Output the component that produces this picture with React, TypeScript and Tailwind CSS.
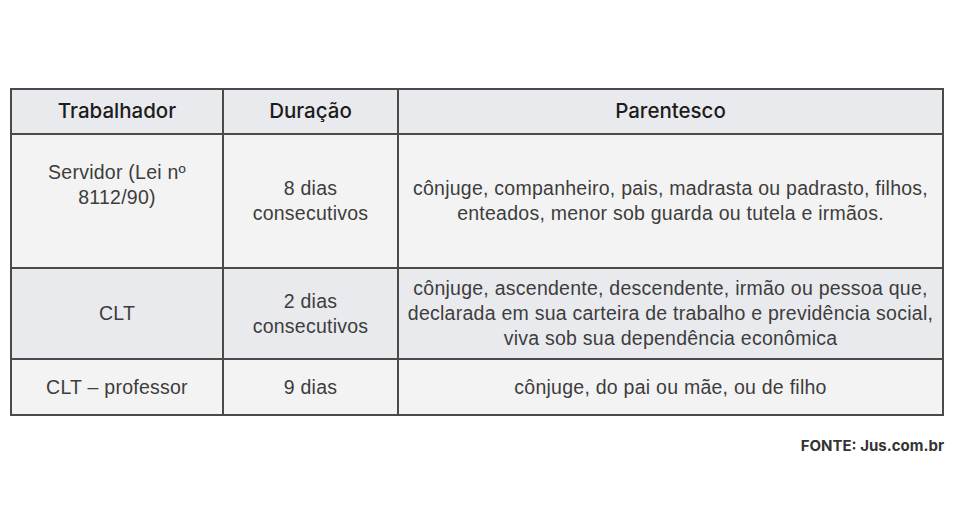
export default function App() {
  const body = "text-[19.5px] leading-[25px] tracking-[0.25px] text-[#3d3d3d] text-center align-middle border-2 border-[#4a4a4a] whitespace-nowrap"
  return (
    <div className="w-[966px] h-[507px] bg-white pt-[88px] pl-[10px]" style={{ fontFamily: '"Liberation Sans", Arial, sans-serif' }}>
      <table className="border-collapse w-[934px] table-fixed">
        <colgroup>
          <col className="w-[212px]" />
          <col className="w-[175px]" />
          <col />
        </colgroup>
        <thead>
          <tr className="h-[45px] bg-[#e9eaee]">
            {['Trabalhador', 'Duração', 'Parentesco'].map((t) => (
              <th key={t} className="border-2 border-[#4a4a4a] text-[20.5px] font-medium text-[#1c1c1c] text-center" style={{ fontFamily: 'Inter, sans-serif' }}>
                {t}
              </th>
            ))}
          </tr>
        </thead>
        <tbody>
          <tr className="h-[134px] bg-[#f3f3f3]">
            <td className={body + " !align-top pt-[25px]"}>Servidor (Lei nº<br />8112/90)</td>
            <td className={body}>8 dias<br />consecutivos</td>
            <td className={body}>cônjuge, companheiro, pais, madrasta ou padrasto, filhos,<br />enteados, menor sob guarda ou tutela e irmãos.</td>
          </tr>
          <tr className="h-[91px] bg-[#e9eaee]">
            <td className={body}>CLT</td>
            <td className={body}>2 dias<br />consecutivos</td>
            <td className={body}>cônjuge, ascendente, descendente, irmão ou pessoa que,<br />declarada em sua carteira de trabalho e previdência social,<br />viva sob sua dependência econômica</td>
          </tr>
          <tr className="h-[56px] bg-[#f3f3f3]">
            <td className={body}>CLT – professor</td>
            <td className={body}>9 dias</td>
            <td className={body}>cônjuge, do pai ou mãe, ou de filho</td>
          </tr>
        </tbody>
      </table>
      <div className="w-[934px] text-right mt-[19px] text-[15px] font-bold text-[#333]" style={{ fontFamily: 'Inter, sans-serif' }}>
        FONTE: Jus.com.br
      </div>
    </div>
  )
}
